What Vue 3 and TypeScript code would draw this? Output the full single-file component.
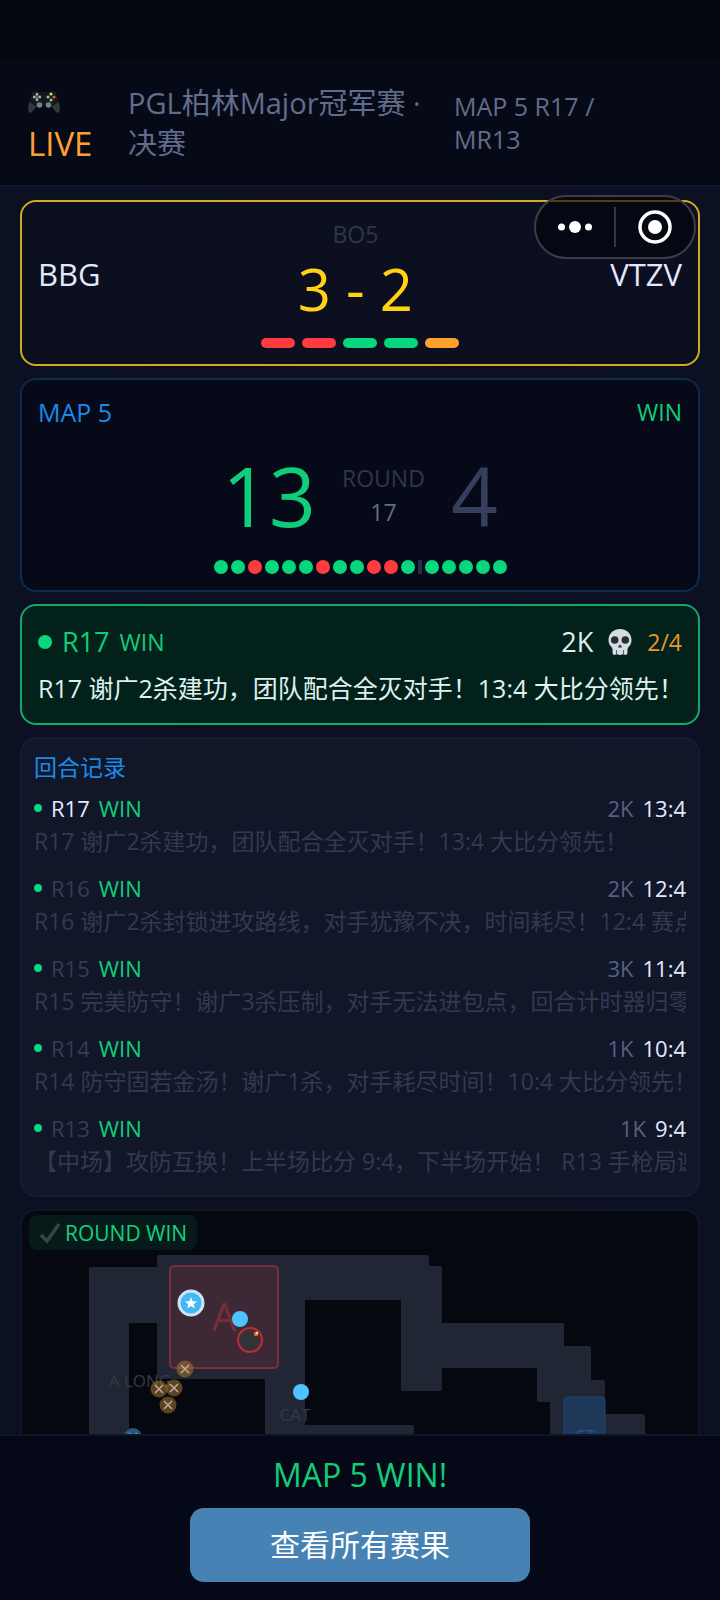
<script setup lang="ts">
type Result = 'win' | 'loss' | 'live'

interface Round {
  id: string
  kills: string
  score: string
  text: string
}

interface Block {
  x: number
  y: number
  w: number
  h: number
}

interface Point {
  x: number
  y: number
}

const series: Result[] = ['loss', 'loss', 'win', 'win', 'live']

const firstHalf: Result[] = ['win', 'win', 'loss', 'win', 'win', 'win', 'loss', 'win', 'win', 'loss', 'loss', 'win']
const secondHalf: Result[] = ['win', 'win', 'win', 'win', 'win']

const rounds: Round[] = [
  { id: 'R17', kills: '2K', score: '13:4', text: 'R17 谢广2杀建功，团队配合全灭对手！13:4 大比分领先！' },
  { id: 'R16', kills: '2K', score: '12:4', text: 'R16 谢广2杀封锁进攻路线，对手犹豫不决，时间耗尽！12:4 赛点' },
  { id: 'R15', kills: '3K', score: '11:4', text: 'R15 完美防守！谢广3杀压制，对手无法进包点，回合计时器归零' },
  { id: 'R14', kills: '1K', score: '10:4', text: 'R14 防守固若金汤！谢广1杀，对手耗尽时间！10:4 大比分领先！' },
  { id: 'R13', kills: '1K', score: '9:4', text: '【中场】攻防互换！上半场比分 9:4，下半场开始！ R13 手枪局谢广' },
]

const blocks: Block[] = [
  { x: 89, y: 67, w: 80, h: 56 },
  { x: 89, y: 67, w: 40, h: 200 },
  { x: 157, y: 55, w: 148, h: 124 },
  { x: 157, y: 55, w: 272, h: 45 },
  { x: 265, y: 90, w: 40, h: 180 },
  { x: 290, y: 225, w: 124, h: 45 },
  { x: 401, y: 66, w: 41, h: 125 },
  { x: 401, y: 123, w: 163, h: 45 },
  { x: 537, y: 146, w: 54, h: 56 },
  { x: 550, y: 180, w: 55, h: 90 },
  { x: 590, y: 214, w: 55, h: 56 },
]

const fallen: Point[] = [
  { x: 185, y: 169 },
  { x: 159, y: 189 },
  { x: 174, y: 188 },
  { x: 168, y: 205 },
]
</script>

<template>
  <div class="page">
    <header class="top">
      <div class="live">
        <svg class="pad" viewBox="0 0 32 24" aria-hidden="true">
          <path d="M4 2Q8 0 11 2H21Q24 0 28 2Q30 8 32 20Q31 24 28 22L22 15H10L4 22Q1 24 0 20Q2 8 4 2Z" fill="#14191b" />
          <path d="M1 12L6 15L8 17L4 22Q1 24 0 20ZM31 12L26 15L24 17L28 22Q31 24 32 20Z" fill="#33383d" />
          <path d="M9 3V11M5 7H13" stroke="#a9b3bc" stroke-width="2.4" />
          <path d="M9 5V9M7 7H11" stroke="#30383f" stroke-width="1" />
          <circle cx="11.500" cy="15" r="2.800" fill="#72808a" />
          <circle cx="20.500" cy="15" r="2.800" fill="#72808a" />
          <circle cx="23" cy="4" r="1.500" fill="#efd36b" />
          <circle cx="20" cy="7" r="1.500" fill="#8fc4b8" />
          <circle cx="26" cy="7" r="1.600" fill="#e5502c" />
          <circle cx="23" cy="10" r="1.500" fill="#a9c765" />
        </svg>
        <span>LIVE</span>
      </div>
      <h1 class="event">PGL柏林Major冠军赛 · 决赛</h1>
      <p class="stage">MAP 5 R17 / MR13</p>
    </header>

    <div class="capsule">
      <button type="button" class="cap-btn" aria-label="More">
        <svg width="36" height="14" viewBox="0 0 36 14"><g fill="#fff"><circle cx="4.500" cy="7" r="3.500" /><circle cx="18" cy="7" r="6" /><circle cx="31.500" cy="7" r="3.500" /></g></svg>
      </button>
      <button type="button" class="cap-btn" aria-label="Close">
        <svg width="34" height="34" viewBox="0 0 34 34"><circle cx="17" cy="17" r="15" fill="none" stroke="#fff" stroke-width="3.500" /><circle cx="17" cy="17" r="7" fill="#fff" /></svg>
      </button>
    </div>

    <main class="feed">
      <section class="card match">
        <div class="teams">
          <span class="team">BBG</span>
          <div class="series">
            <span class="muted">BO5</span>
            <strong class="total">3 - 2</strong>
          </div>
          <span class="team">VTZV</span>
        </div>
        <div class="pills">
          <i v-for="(r, i) in series" :key="i" class="pill" :class="r"></i>
        </div>
      </section>

      <section class="card map">
        <div class="between">
          <span class="blue">MAP 5</span>
          <span class="small green">WIN</span>
        </div>
        <div class="score">
          <span class="big green">13</span>
          <div class="round">
            <span class="muted">ROUND</span>
            <span class="num">17</span>
          </div>
          <span class="big dim">4</span>
        </div>
        <div class="dots">
          <i v-for="(r, i) in firstHalf" :key="'a' + i" class="dot" :class="r"></i>
          <i class="half"></i>
          <i v-for="(r, i) in secondHalf" :key="'b' + i" class="dot" :class="r"></i>
        </div>
      </section>

      <section class="card now">
        <div class="between">
          <div class="group">
            <i class="dot win"></i>
            <span class="now-id green">R17</span>
            <span class="small green">WIN</span>
          </div>
          <div class="group right">
            <span class="now-id pale">2K</span>
            <svg width="24" height="26" viewBox="0 0 24 26" aria-hidden="true">
              <path d="M12 0C19 0 23.500 5 23.500 11C23.500 14 22.500 16 21 17.500Q20 18 19.500 20V23Q19.500 26 17.500 26Q15.800 26 15.500 23.500Q15 26 12 26Q9 26 8.500 23.500Q8.200 26 6.500 26Q4.500 26 4.500 23V20Q4 18 3 17.500C1.500 16 .5 14 .5 11C.5 5 5 0 12 0Z" fill="#d3dce0" />
              <circle cx="6.700" cy="11" r="3.800" fill="#262f36" />
              <circle cx="17.300" cy="11" r="3.800" fill="#262f36" />
              <path d="M12 15.500Q14 17 14 18.500H10Q10 17 12 15.500Z" fill="#4a2f34" />
              <path d="M8.500 21V26M15.500 21V26" stroke="#51636a" stroke-width="1" />
            </svg>
            <span class="small orange">2/4</span>
          </div>
        </div>
        <p class="message">R17 谢广2杀建功，团队配合全灭对手！13:4 大比分领先！</p>
      </section>

      <section class="card log">
        <h2 class="log-title">回合记录</h2>
        <ul class="rounds">
          <li v-for="(r, i) in rounds" :key="r.id" class="row">
            <div class="row-head">
              <i class="tiny"></i>
              <span class="row-id" :class="{ current: i === 0 }">{{ r.id }}</span>
              <span class="green">WIN</span>
              <span class="kills">{{ r.kills }}</span>
              <span class="row-score">{{ r.score }}</span>
            </div>
            <p class="row-text">{{ r.text }}</p>
          </li>
        </ul>
      </section>

      <section class="card radar">
        <div class="badge">
          <svg width="22" height="22" viewBox="0 0 22 22" aria-hidden="true"><path d="M2 13L8 19L20 2" fill="none" stroke="#38443f" stroke-width="3.500" /></svg>
          <span>ROUND WIN</span>
        </div>
        <svg class="plan" viewBox="22 11 676 300" role="img" aria-label="Map">
          <rect v-for="(b, i) in blocks" :key="i" :x="b.x" :y="b.y" :width="b.w" :height="b.h" rx="2" fill="#202634" />
          <rect x="170" y="66" width="108" height="102" rx="4" fill="#3d2935" stroke="#7b2f3e" stroke-width="2" />
          <rect x="564" y="197" width="41" height="70" rx="4" fill="#1e3859" stroke="#23466f" stroke-width="1" />
          <text x="224" y="131" font-size="38" fill="#7a2c38">A</text>
          <text x="585" y="242" font-size="17" fill="#2a5688">CT</text>
          <text x="140" y="187" font-size="17" fill="#353a46">A LONG</text>
          <text x="295" y="221" font-size="17" fill="#353a46">CAT</text>
          <g v-for="(p, i) in fallen" :key="'f' + i">
            <circle :cx="p.x" :cy="p.y" r="8.500" fill="#a87532" fill-opacity=".55" />
            <path :d="`M${p.x - 4} ${p.y - 4}l8 8m0 -8l-8 8`" stroke="#b9aa95" stroke-width="1.600" />
          </g>
          <circle cx="133" cy="237" r="9" fill="#205a7a" />
          <path d="M129 233l8 8m0 -8l-8 8" stroke="#7f9aa8" stroke-width="1.600" />
          <circle cx="250" cy="140" r="12" fill="#3d2f38" stroke="#b82d38" stroke-width="2" />
          <circle cx="249" cy="141" r="8" fill="#303438" />
          <circle cx="256" cy="134" r="2.200" fill="#f26a2e" />
          <circle cx="257" cy="133" r="1.200" fill="#ffe28a" />
          <circle cx="240" cy="119" r="8" fill="#4dc3ff" />
          <circle cx="301" cy="192" r="8" fill="#4dc3ff" />
          <circle cx="191" cy="103" r="12" fill="#42b8f5" stroke="#cfe4f2" stroke-width="3" />
          <path d="M191 97l1.600 4.200 4.600.2-3.600 2.800 1.200 4.400-3.800-2.500-3.800 2.500 1.200-4.400-3.600-2.800 4.600-.2z" fill="#fff" />
        </svg>
      </section>
    </main>

    <footer class="foot">
      <p class="outcome">MAP 5 WIN!</p>
      <button type="button" class="cta">查看所有赛果</button>
    </footer>
  </div>
</template>

<style>
body {
  margin: 0;
  background: #0b0f20;
}
</style>

<style scoped>
.page {
  position: relative;
  display: flex;
  flex-direction: column;
  height: 100vh;
  overflow: hidden;
  box-sizing: border-box;
  border-top: 60px solid #04070e;
  background: linear-gradient(90deg, #0b1023, #0c1020 50%, #0b1023);
  color: #e3e8fa;
  font-family: "Open Sans", "Noto Sans CJK SC", sans-serif;
  font-size: 24px;
  line-height: 32px;
}
h1, h2, p, ul {
  margin: 0;
  padding: 0;
  font-weight: 400;
}
i {
  display: block;
  flex: none;
}
.top {
  display: flex;
  align-items: center;
  flex: none;
  box-sizing: border-box;
  height: 127px;
  padding: 0 106px 0 28px;
  background: #060a17;
  border-bottom: 2px solid #121828;
}
.live {
  display: flex;
  flex-direction: column;
  flex: none;
  width: 100px;
  color: #ffa02e;
  font-size: 33px;
  line-height: 42px;
}
.pad {
  width: 32px;
  height: 24px;
  margin: 9px 0;
}
.event {
  flex: 1;
  padding-right: 16px;
  color: #626c8c;
  font-size: 29px;
  line-height: 40px;
}
.stage {
  flex: none;
  width: 160px;
  color: #626c8c;
  font-size: 25px;
  line-height: 33px;
}
.capsule {
  position: absolute;
  z-index: 2;
  top: 135px;
  right: 24px;
  display: flex;
  box-sizing: border-box;
  width: 162px;
  height: 64px;
  padding: 10px 0;
  border: 2px solid #3b3d48;
  border-radius: 32px;
  background: rgba(3, 5, 12, 0.65);
}
.cap-btn {
  display: flex;
  flex: 1;
  align-items: center;
  justify-content: center;
  padding: 0;
  border: 0;
  background: none;
}
.cap-btn + .cap-btn {
  border-left: 2px solid #343743;
}
.feed {
  display: flex;
  flex: 1;
  flex-direction: column;
  gap: 12px;
  min-height: 0;
  padding: 13px 20px 0;
  overflow: hidden;
}
.card {
  flex: none;
  box-sizing: border-box;
  border: 2px solid #171d31;
  border-radius: 16px;
  padding: 16px;
}
.match {
  border-color: #d3ab20;
  background: #0b0f20;
}
.teams,
.between {
  display: flex;
  align-items: center;
  justify-content: space-between;
}
.team {
  font-size: 31px;
  padding-bottom: 8px;
}
.series {
  display: flex;
  flex-direction: column;
  align-items: center;
}
.muted {
  color: #2f354b;
  font-size: 23px;
}
.total {
  color: #ffd214;
  font-size: 58px;
  font-weight: 400;
  line-height: 78px;
  padding-bottom: 10px;
}
.pills {
  display: flex;
  justify-content: center;
  gap: 7px;
}
.pill {
  width: 34px;
  height: 10px;
  border-radius: 5px;
}
.win {
  background: #06d67c;
}
.loss {
  background: #ff3b3f;
}
.pill.live {
  background: #ffa02e;
}
.map {
  border-color: #0b2b4f;
  background: #060a18;
}
.blue {
  color: #1a8bea;
  font-size: 25px;
}
.small {
  font-size: 23px;
}
.green {
  color: #10cd7b;
}
.orange {
  color: #e8962e;
}
.score {
  display: flex;
  align-items: center;
  justify-content: center;
  gap: 26px;
  height: 106px;
  margin: 14px 0 12px;
}
.big {
  font-size: 82px;
  line-height: 106px;
}
.dim {
  color: #353e5a;
}
.round {
  display: flex;
  flex-direction: column;
  align-items: center;
  line-height: 34px;
}
.num {
  color: #626c8c;
  font-size: 23px;
}
.dots {
  display: flex;
  justify-content: center;
  gap: 3px;
}
.dot {
  width: 14px;
  height: 14px;
  border-radius: 50%;
}
.half {
  width: 4px;
  height: 14px;
  background: #272e45;
}
.now {
  border-color: #15a86b;
  background: #02211a;
}
.group {
  display: flex;
  align-items: center;
  gap: 10px;
  height: 40px;
}
.group.right {
  gap: 15px;
}
.now-id {
  font-size: 27px;
}
.pale,
.message {
  color: #dff0f0;
}
.message {
  padding: 8px 0 0;
  font-size: 25px;
  line-height: 37px;
  white-space: nowrap;
}
.log {
  padding: 12px;
  background: #111629;
}
.log-title {
  color: #1a8bea;
  font-size: 23px;
  line-height: 32px;
}
.rounds {
  list-style: none;
}
.row {
  box-sizing: border-box;
  height: 80px;
  padding-top: 9px;
  border-bottom: 2px solid #141a2d;
}
.row-head {
  display: flex;
  align-items: center;
  gap: 9px;
  font-size: 22px;
}
.tiny {
  width: 8px;
  height: 8px;
  border-radius: 50%;
  background: #06d67c;
}
.row-id {
  color: #363d57;
}
.row-id.current,
.row-score {
  color: #e6eaff;
}
.kills {
  margin-left: auto;
  color: #586180;
}
.row-text {
  overflow: hidden;
  color: #323952;
  font-size: 23px;
  line-height: 34px;
  white-space: nowrap;
}
.radar {
  position: relative;
  padding: 0;
  overflow: hidden;
  border-color: #111625;
  background: #05080f;
}
.badge {
  position: absolute;
  top: 4px;
  left: 7px;
  display: flex;
  align-items: center;
  gap: 4px;
  height: 35px;
  padding: 0 10px;
  border-radius: 8px;
  background: #061a19;
  color: #12d181;
  font-size: 21px;
}
.plan {
  display: block;
  width: 100%;
  text-anchor: middle;
}
.foot {
  display: flex;
  flex: none;
  flex-direction: column;
  align-items: center;
  gap: 12px;
  padding: 17px 20px 18px;
  border-top: 2px solid #10162a;
  background: #050917;
}
.outcome {
  color: #10cd7b;
  font-size: 32px;
  line-height: 43px;
}
.cta {
  width: 50%;
  min-width: 340px;
  height: 74px;
  padding: 0;
  border: 0;
  border-radius: 14px;
  background: #4682b4;
  color: #fff;
  font: inherit;
  font-size: 30px;
}
</style>
